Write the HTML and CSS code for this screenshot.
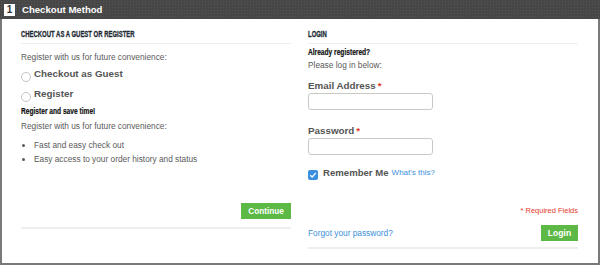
FILE: index.html
```html
<!DOCTYPE html>
<html lang="en">
<head>
    <meta charset="UTF-8">
    <title>Checkout Method</title>
    <link rel="stylesheet" href="styles.css">
</head>
<body>
    <div class="step">
        <div class="step-title">
            <span class="step-num">1</span>
            <h2>Checkout Method</h2>
        </div>
        <div class="step-body">
            <div class="col">
                <h3><span>Checkout as a Guest or Register</span></h3>
                <p class="note intro">Register with us for future convenience:</p>
                <label class="radio guest"><span class="radio-dot"></span>Checkout as Guest</label>
                <label class="radio reg"><span class="radio-dot"></span>Register</label>
                <h4 class="save"><span>Register and save time!</span></h4>
                <p class="note again">Register with us for future convenience:</p>
                <ul class="perks">
                    <li>Fast and easy check out</li>
                    <li>Easy access to your order history and status</li>
                </ul>
                <div class="actions right">
                    <button class="btn">Continue</button>
                </div>
                <div class="rule"></div>
            </div>
            <div class="col">
                <h3><span>Login</span></h3>
                <h4 class="first"><span>Already registered?</span></h4>
                <p class="note below">Please log in below:</p>
                <label class="field-label">Email Address<em>*</em></label>
                <input class="input" type="text">
                <label class="field-label pw">Password<em>*</em></label>
                <input class="input" type="password">
                <div class="remember">
                    <span class="check">
                        <svg width="8" height="8" viewBox="0 0 8 8"><path d="M1.2 4.2 L3.2 6 L6.8 1.8" fill="none" stroke="#fff" stroke-width="1.3"/></svg>
                    </span>
                    <span class="remember-text">Remember Me</span>
                    <a href="#" class="link small">What's this?</a>
                </div>
                <p class="required">* Required Fields</p>
                <div class="actions split">
                    <a href="#" class="link">Forgot your password?</a>
                    <button class="btn">Login</button>
                </div>
                <div class="rule"></div>
            </div>
        </div>
    </div>
</body>
</html>
```

FILE: styles.css
```css
body {
    margin: 0;
    font-family: "Liberation Sans", Arial, sans-serif;
    color: #555;
    background: #fff;
}
.step {
    width: 600px;
    height: 265px;
}
.step-title {
    display: flex;
    align-items: center;
    height: 19px;
    padding-left: 4px;
    background-color: #474747;
    background-image: radial-gradient(#555 0.6px, transparent 0.8px);
    background-size: 3px 3px;
}
.step-num {
    width: 11px;
    height: 12px;
    background: #fff;
    color: #333;
    font-size: 10px;
    font-weight: bold;
    text-align: center;
    line-height: 12px;
    margin-right: 7px;
}
.step-title h2 {
    margin: 0;
    color: #fff;
    font-size: 9.6px;
    font-weight: bold;
}
.step-body {
    display: grid;
    grid-template-columns: 270px 270px;
    column-gap: 17px;
    height: 246px;
    box-sizing: border-box;
    padding: 0 19px;
    border-left: 2px solid #7a7a7a;
    border-right: 2px solid #7a7a7a;
    border-bottom: 2px solid #7a7a7a;
}
.col {
    display: flex;
    flex-direction: column;
}

/* condensed headings */
h3 {
    margin: 10px 0 0;
    padding-bottom: 4px;
    line-height: 10px;
    border-bottom: 1px solid #eee;
    font-size: 9px;
    font-weight: 900;
    text-transform: uppercase;
    color: #1d2a33;
}
h3 span {
    display: inline-block;
    transform: scaleX(0.66);
    transform-origin: left center;
    white-space: nowrap;
    -webkit-text-stroke: 0.3px #1d2a33;
}
h4 {
    margin: 0;
    line-height: 10px;
    font-size: 8.6px;
    font-weight: bold;
    color: #111;
}
h4 span {
    display: inline-block;
    transform: scaleX(0.77);
    transform-origin: left center;
    white-space: nowrap;
    -webkit-text-stroke: 0.2px #111;
}
.note {
    margin: 0;
    line-height: 10px;
    font-size: 8.3px;
    color: #5a5a5a;
}
.note.intro { margin-top: 8px; }
.radio.guest { margin-top: 6px; }
.radio.reg { margin-top: 8px; }
h4.save { margin-top: 6px; }
.note.again { margin-top: 5px; }
h4.first { margin-top: 3px; }
.note.below { margin-top: 3px; }

.radio {
    display: flex;
    align-items: flex-start;
    line-height: 12px;
    font-size: 9.8px;
    font-weight: bold;
    color: #555;
}
.radio-dot {
    width: 10px;
    height: 10px;
    border: 1px solid #c4c4c4;
    border-radius: 50%;
    margin: 4px 3px -2px 0;
    box-sizing: border-box;
}
.perks {
    margin: 7px 0 0;
    padding-left: 13px;
    font-size: 8.3px;
    line-height: 14px;
    color: #5a5a5a;
}
.actions {
    display: flex;
    align-items: center;
}
.actions.right {
    justify-content: flex-end;
    margin-top: 37px;
}
.actions.split {
    justify-content: space-between;
    margin-top: 9px;
}
.btn {
    border: 0;
    background: #5cb946;
    color: #fff;
    font-family: "Liberation Sans", Arial, sans-serif;
    font-size: 8.2px;
    font-weight: bold;
    height: 16px;
    width: 50px;
    padding: 0;
}
.actions.split .btn {
    font-size: 8.6px;
    width: 37px;
}
.rule {
    height: 2px;
    background: #eee;
    margin-top: 8px;
}
.col:last-child .rule {
    margin-top: 6px;
}
.field-label {
    margin-top: 10px;
    line-height: 12px;
    font-size: 9.8px;
    font-weight: bold;
    color: #555;
}
.field-label.pw {
    margin-top: 15px;
}
.field-label em {
    color: #e53b2c;
    font-style: normal;
    margin-left: 2px;
}
.input {
    width: 125px;
    height: 17px;
    box-sizing: border-box;
    margin-top: 1px;
    border: 1px solid #c9c9c4;
    border-radius: 3px;
}
.remember {
    display: flex;
    align-items: flex-start;
    margin-top: 12px;
    line-height: 12px;
}
.check {
    width: 10px;
    height: 10px;
    background: #3b8fe0;
    border-radius: 2px;
    display: flex;
    align-items: center;
    justify-content: center;
    margin: 3px 5px 0 0;
}
.remember-text {
    font-size: 9.6px;
    font-weight: bold;
    color: #555;
    margin-right: 3px;
}
.link {
    color: #3a8fd8;
    text-decoration: none;
    font-size: 8.3px;
}
.link.small {
    font-size: 8px;
}
.required {
    margin: 26px 0 0;
    line-height: 10px;
    text-align: right;
    font-size: 7.5px;
    color: #e53b2c;
}
```
